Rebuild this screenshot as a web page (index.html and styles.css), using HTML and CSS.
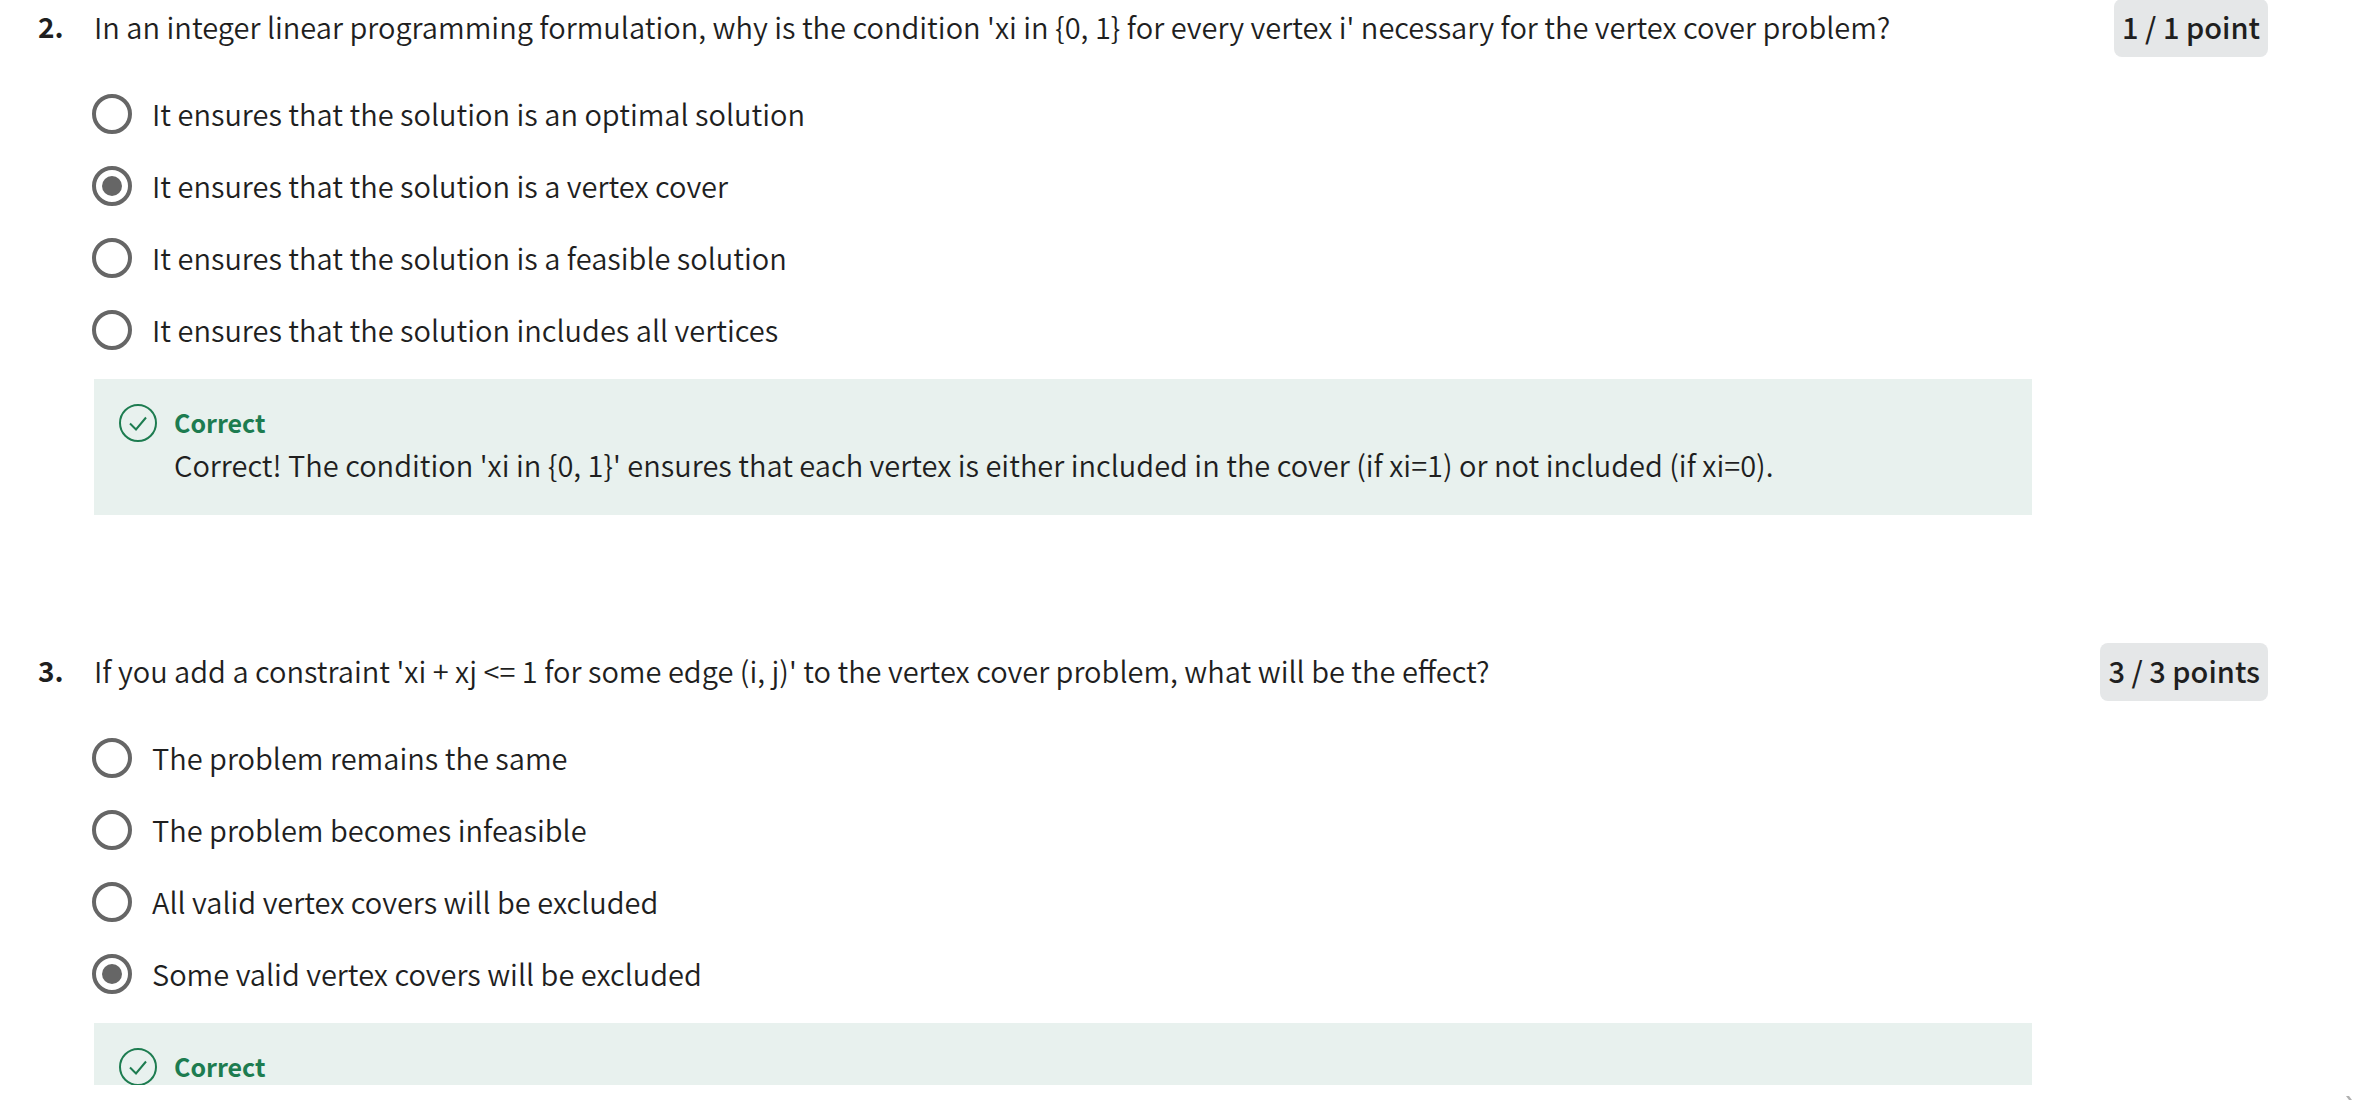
FILE: index.html
```html
<!DOCTYPE html>
<html lang="en">
<head>
<meta charset="utf-8">
<title>Vertex cover quiz</title>
<link rel="stylesheet" href="styles.css">
</head>
<body>
<main class="quiz">
  <section class="question">
    <div class="number">2.</div>
    <h2 class="prompt" id="q2">In an integer linear programming formulation, why is the condition 'xi in {0, 1} for every vertex i' necessary for the vertex cover problem?</h2>
    <div class="points">1 / 1 point</div>
    <div class="answers">
      <div class="options" role="radiogroup" aria-labelledby="q2">
        <label class="option"><input type="radio" name="q2"><span>It ensures that the solution is an optimal solution</span></label>
        <label class="option"><input type="radio" name="q2" checked><span>It ensures that the solution is a vertex cover</span></label>
        <label class="option"><input type="radio" name="q2"><span>It ensures that the solution is a feasible solution</span></label>
        <label class="option"><input type="radio" name="q2"><span>It ensures that the solution includes all vertices</span></label>
      </div>
      <div class="feedback">
        <svg class="check" viewBox="0 0 38 38" aria-hidden="true"><circle cx="19" cy="19" r="18"/><path d="M11 19.500l6 6 10-12"/></svg>
        <div>
          <strong class="verdict">Correct</strong>
          <p class="explanation">Correct! The condition 'xi in {0, 1}' ensures that each vertex is either included in the cover (if xi=1) or not included (if xi=0).</p>
        </div>
      </div>
    </div>
  </section>
  <section class="question">
    <div class="number">3.</div>
    <h2 class="prompt" id="q3">If you add a constraint 'xi + xj &lt;= 1 for some edge (i, j)' to the vertex cover problem, what will be the effect?</h2>
    <div class="points">3 / 3 points</div>
    <div class="answers">
      <div class="options" role="radiogroup" aria-labelledby="q3">
        <label class="option"><input type="radio" name="q3"><span>The problem remains the same</span></label>
        <label class="option"><input type="radio" name="q3"><span>The problem becomes infeasible</span></label>
        <label class="option"><input type="radio" name="q3"><span>All valid vertex covers will be excluded</span></label>
        <label class="option"><input type="radio" name="q3" checked><span>Some valid vertex covers will be excluded</span></label>
      </div>
      <div class="feedback">
        <svg class="check" viewBox="0 0 38 38" aria-hidden="true"><circle cx="19" cy="19" r="18"/><path d="M11 19.500l6 6 10-12"/></svg>
        <div>
          <strong class="verdict">Correct</strong>
        </div>
      </div>
    </div>
  </section>
</main>
<footer class="edge">
  <svg class="arrow" viewBox="0 0 6 4" aria-hidden="true"><path d="M0 0h3l3 4H3z"/></svg>
</footer>
</body>
</html>
```
FILE: styles.css
```css
* {
  box-sizing: border-box;
}

body {
  margin: 0;
  height: 100vh;
  display: flex;
  flex-direction: column;
  background: #fff;
  color: #1f1f1f;
  font: 350 29px/42px "Noto Sans CJK SC", "Noto Sans", sans-serif;
}

.quiz {
  flex: 1;
  min-height: 0;
  margin-top: -1px;
  padding: 0 96px 0 38px;
  overflow: hidden;
}

.question {
  display: grid;
  grid-template-columns: 56px 1fr auto;
  row-gap: 37px;
  margin-bottom: 128px;
}

.number,
.prompt {
  padding-top: 6px;
}

.number {
  font-size: 28px;
  font-weight: 700;
}

.prompt {
  margin: 0;
  font-size: 29px;
  font-weight: 350;
}

.points {
  height: 58px;
  padding: 6px 8px;
  border-radius: 8px;
  background: #e5e7e8;
  font-weight: 500;
}

.answers {
  grid-column: 2 / -1;
  margin-right: 236px;
}

.options {
  display: grid;
  gap: 32px;
  margin: 0 0 29px -2px;
}

.option {
  display: flex;
  align-items: center;
  gap: 20px;
  height: 40px;
}

.option span {
  padding-bottom: 3px;
}

.option input {
  appearance: none;
  flex: none;
  width: 40px;
  height: 40px;
  margin: 0;
  border: 4px solid #666;
  border-radius: 50%;
}

.option input:checked {
  padding: 6px;
  background: #666 content-box;
}

.feedback {
  display: flex;
  gap: 17px;
  min-height: 136px;
  padding: 22px 25px;
  background: #e8f1ee;
}

.check {
  flex: none;
  width: 38px;
  height: 38px;
  margin-top: 3px;
  fill: none;
  stroke: #1d7c50;
  stroke-width: 2;
}

.verdict {
  display: block;
  color: #1d7c50;
  font-size: 25px;
  font-weight: 700;
  line-height: 42px;
}

.explanation {
  margin: 0;
}

.edge {
  flex: none;
  display: flex;
  align-items: flex-end;
  justify-content: flex-end;
  height: 15px;
  padding-right: 12px;
}

.arrow {
  width: 6px;
  height: 4px;
  fill: #b0b0b0;
}
```
